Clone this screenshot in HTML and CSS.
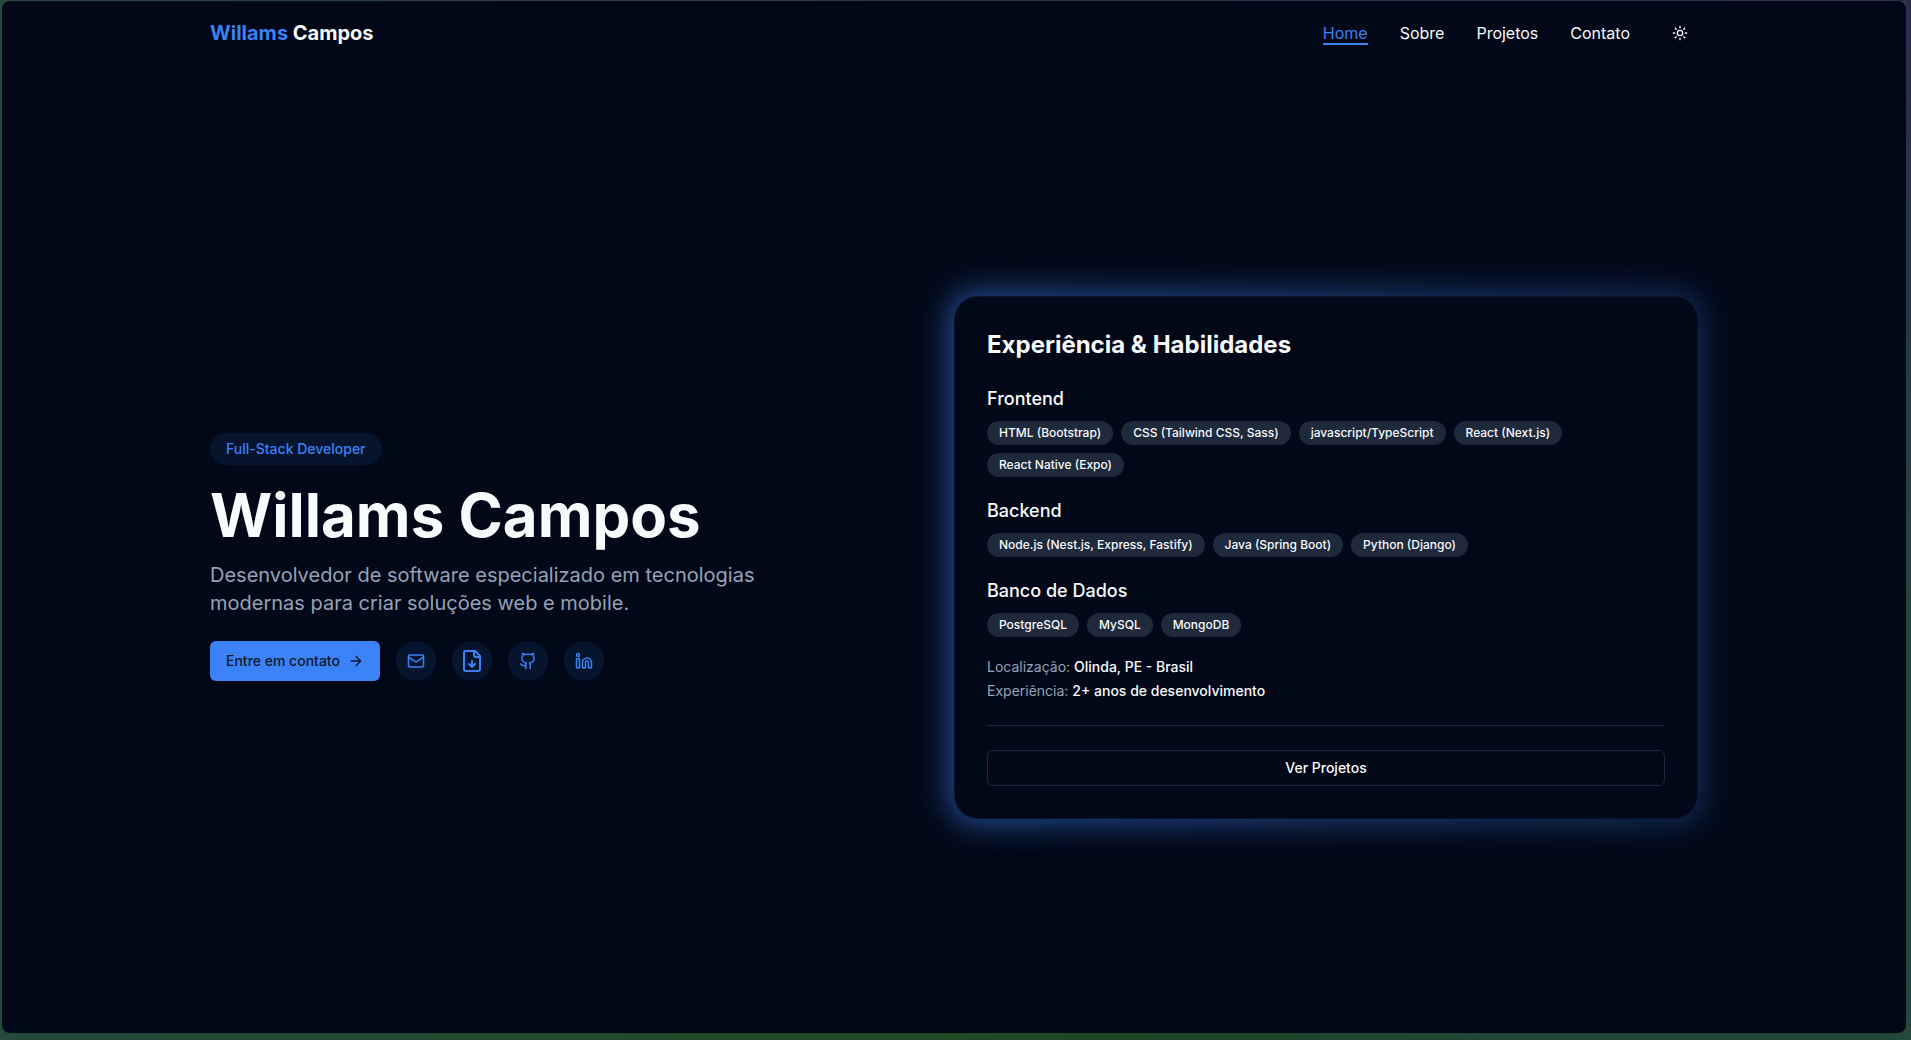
FILE: index.html
```html
<!DOCTYPE html>
<html lang="pt-BR">
<head>
  <meta charset="utf-8">
  <meta name="viewport" content="width=device-width, initial-scale=1">
  <title>Willams Campos</title>
  <link rel="stylesheet" href="styles.css">
</head>
<body>
  <div class="window">
    <header class="container header">
      <a class="brand" href="#home"><span class="brand-accent">Willams</span> Campos</a>
      <nav class="nav">
        <a class="nav-link nav-link-active" href="#home">Home</a>
        <a class="nav-link" href="#sobre">Sobre</a>
        <a class="nav-link" href="#projetos">Projetos</a>
        <a class="nav-link" href="#contato">Contato</a>
        <button class="theme-toggle" type="button" aria-label="Alternar tema">
          <svg class="icon icon-sm" viewBox="0 0 24 24"><circle cx="12" cy="12" r="4"/><path d="M12 2v2M12 20v2M4.93 4.93l1.41 1.41M17.66 17.66l1.41 1.41M2 12h2M20 12h2M6.34 17.66l-1.41 1.41M19.07 4.93l-1.41 1.41"/></svg>
        </button>
      </nav>
    </header>

    <main class="container hero">
      <section class="intro">
        <p class="role">Full-Stack Developer</p>
        <h1 class="name">Willams Campos</h1>
        <p class="summary">Desenvolvedor de software especializado em tecnologias modernas para criar soluções web e mobile.</p>
        <div class="actions">
          <a class="contact" href="#contato">Entre em contato
            <svg class="icon icon-sm" viewBox="0 0 24 24"><path d="M5 12h14M12 5l7 7-7 7"/></svg>
          </a>
          <a class="social" href="#email" aria-label="E-mail">
            <svg class="icon icon-md" viewBox="0 0 24 24"><rect width="20" height="16" x="2" y="4" rx="2"/><path d="m22 7-8.97 5.7a1.94 1.94 0 0 1-2.06 0L2 7"/></svg>
          </a>
          <a class="social" href="#curriculo" aria-label="Baixar currículo">
            <svg class="icon icon-lg" viewBox="0 0 24 24"><path d="M15 2H6a2 2 0 0 0-2 2v16a2 2 0 0 0 2 2h12a2 2 0 0 0 2-2V7Z"/><path d="M14 2v4a2 2 0 0 0 2 2h4M12 18v-6M9 15l3 3 3-3"/></svg>
          </a>
          <a class="social" href="#github" aria-label="GitHub">
            <svg class="icon icon-md" viewBox="0 0 24 24"><path d="M15 22v-4a4.8 4.8 0 0 0-1-3.5c3 0 6-2 6-5.5.08-1.25-.27-2.48-1-3.5.28-1.15.28-2.35 0-3.5 0 0-1 0-3 1.5-2.64-.5-5.36-.5-8 0C6 2 5 2 5 2c-.3 1.15-.3 2.35 0 3.5A5.403 5.403 0 0 0 4 9c0 3.5 3 5.5 6 5.5-.39.49-.68 1.05-.85 1.65-.17.6-.22 1.23-.15 1.85v4"/><path d="M9 18c-4.51 2-5-2-7-2"/></svg>
          </a>
          <a class="social" href="#linkedin" aria-label="LinkedIn">
            <svg class="icon icon-md" viewBox="0 0 24 24"><path d="M16 8a6 6 0 0 1 6 6v7h-4v-7a2 2 0 0 0-4 0v7h-4v-7a6 6 0 0 1 6-6z"/><rect width="4" height="12" x="2" y="9"/><circle cx="4" cy="4" r="2"/></svg>
          </a>
        </div>
      </section>

      <div class="card-glow">
        <section class="card">
          <h2 class="card-title">Experiência &amp; Habilidades</h2>
          <div class="skills">
            <div class="skill-group">
              <h3 class="skill-title">Frontend</h3>
              <ul class="chips">
                <li class="chip">HTML (Bootstrap)</li>
                <li class="chip">CSS (Tailwind CSS, Sass)</li>
                <li class="chip">javascript/TypeScript</li>
                <li class="chip">React (Next.js)</li>
                <li class="chip">React Native (Expo)</li>
              </ul>
            </div>
            <div class="skill-group">
              <h3 class="skill-title">Backend</h3>
              <ul class="chips">
                <li class="chip">Node.js (Nest.js, Express, Fastify)</li>
                <li class="chip">Java (Spring Boot)</li>
                <li class="chip">Python (Django)</li>
              </ul>
            </div>
            <div class="skill-group">
              <h3 class="skill-title">Banco de Dados</h3>
              <ul class="chips">
                <li class="chip">PostgreSQL</li>
                <li class="chip">MySQL</li>
                <li class="chip">MongoDB</li>
              </ul>
            </div>
            <div class="facts">
              <p><span class="fact-label">Localização:</span> <span class="fact-value">Olinda, PE - Brasil</span></p>
              <p><span class="fact-label">Experiência:</span> <span class="fact-value">2+ anos de desenvolvimento</span></p>
            </div>
          </div>
          <div class="card-footer">
            <button class="projects" type="button">Ver Projetos</button>
          </div>
        </section>
      </div>
    </main>
  </div>
</body>
</html>
```
FILE: styles.css
```css
:root {
  --bg: #020817;
  --fg: #f8fafc;
  --muted: #94a3b8;
  --line: #1e293b;
  --primary: #3b82f6;
  --primary-soft: rgba(59, 130, 246, 0.1);
}

* {
  box-sizing: border-box;
  margin: 0;
  padding: 0;
}

body {
  min-height: 100vh;
  display: flex;
  padding: 1px 5px 7px 2px;
  background:
    linear-gradient(to bottom, #2c2b4c, #24453f 60%, #23483c) right / 5px 100% no-repeat,
    linear-gradient(to right, #2a4a40, #2c2b4c) top / 100% 1px no-repeat,
    linear-gradient(to right, #25493b, #1f4a24 50%, #1f4428 62%, #23463b 85%);
  color: var(--fg);
  font: 400 16px/24px Inter, "Liberation Sans", sans-serif;
}

a {
  color: inherit;
  text-decoration: none;
}

ul {
  list-style: none;
}

button {
  border: 0;
  background: none;
  color: inherit;
  font: inherit;
  cursor: pointer;
}

.window {
  flex: 1;
  display: flex;
  flex-direction: column;
  overflow: hidden;
  border-radius: 8px;
  background: var(--bg);
}

.container {
  width: 100%;
  max-width: 1536px;
  margin: 0 auto;
  padding: 0 24px;
}

.header {
  height: 64px;
  display: flex;
  align-items: center;
  justify-content: space-between;
}

.brand {
  font-size: 20px;
  line-height: 28px;
  font-weight: 700;
}

.brand-accent {
  color: var(--primary);
}

.nav {
  display: flex;
  align-items: center;
  gap: 32px;
}

.nav-link {
  padding-top: 2px;
  border-bottom: 2px solid transparent;
  line-height: 20px;
}

.nav-link-active {
  border-color: var(--primary);
  color: var(--primary);
}

.theme-toggle {
  width: 36px;
  height: 36px;
  display: grid;
  place-items: center;
}

.icon {
  fill: none;
  stroke: currentColor;
  stroke-width: 2;
  stroke-linecap: round;
  stroke-linejoin: round;
}

.icon-sm {
  width: 16px;
  height: 16px;
}

.icon-md {
  width: 18px;
  height: 18px;
}

.icon-lg {
  width: 24px;
  height: 24px;
}

.hero {
  flex: 1;
  display: grid;
  grid-template-columns: repeat(2, minmax(0, 1fr));
  align-items: center;
  padding-top: 16px;
}

.intro {
  display: flex;
  flex-direction: column;
  align-items: flex-start;
}

.role {
  padding: 6px 16px;
  border-radius: 16px;
  background: var(--primary-soft);
  color: var(--primary);
  font-size: 14px;
  line-height: 20px;
  font-weight: 500;
}

.name {
  margin: 20px 0 16px;
  font-size: 60px;
  line-height: 60px;
  font-weight: 700;
}

.summary {
  max-width: 600px;
  color: var(--muted);
  font-size: 20px;
  line-height: 28px;
}

.actions {
  display: flex;
  flex-wrap: wrap;
  gap: 16px;
  margin-top: 24px;
}

.contact {
  height: 40px;
  display: flex;
  align-items: center;
  gap: 8px;
  padding: 0 16px;
  border-radius: 6px;
  background: var(--primary);
  color: #0f172a;
  font-size: 14px;
  font-weight: 500;
}

.social {
  width: 40px;
  height: 40px;
  display: grid;
  place-items: center;
  border-radius: 50%;
  background: var(--primary-soft);
  color: var(--primary);
}

/* Blurred gradient behind the card, brighter on the left */
.card-glow {
  position: relative;
  z-index: 0;
}

.card-glow::before {
  content: "";
  position: absolute;
  inset: -4px;
  z-index: -1;
  border-radius: 24px;
  background: linear-gradient(to right, rgba(59, 130, 246, 0.6), rgba(59, 130, 246, 0.3));
  filter: blur(16px);
}

.card {
  padding: 32px;
  border: 1px solid var(--primary-soft);
  border-radius: 24px;
  background: var(--bg);
}

.card-title {
  margin-bottom: 24px;
  font-size: 24px;
  line-height: 32px;
  font-weight: 700;
}

.skills {
  display: grid;
  gap: 20px;
}

.skill-group {
  display: grid;
  gap: 8px;
}

.skill-title {
  font-size: 18px;
  line-height: 28px;
  font-weight: 500;
}

.chips {
  display: flex;
  flex-wrap: wrap;
  gap: 8px;
}

.chip {
  padding: 4px 12px;
  border-radius: 12px;
  background: var(--line);
  font-size: 12px;
  line-height: 16px;
  font-weight: 500;
}

.facts {
  display: grid;
  gap: 4px;
  font-size: 14px;
  line-height: 20px;
}

.fact-label {
  color: var(--muted);
}

.fact-value {
  font-weight: 500;
}

.card-footer {
  margin-top: 24px;
  padding-top: 24px;
  border-top: 1px solid var(--line);
}

.projects {
  width: 100%;
  height: 36px;
  border: 1px solid var(--line);
  border-radius: 6px;
  font-size: 14px;
  font-weight: 500;
}

@media (max-width: 900px) {
  .hero {
    grid-template-columns: 1fr;
    gap: 48px;
    padding-bottom: 48px;
  }
}
```
